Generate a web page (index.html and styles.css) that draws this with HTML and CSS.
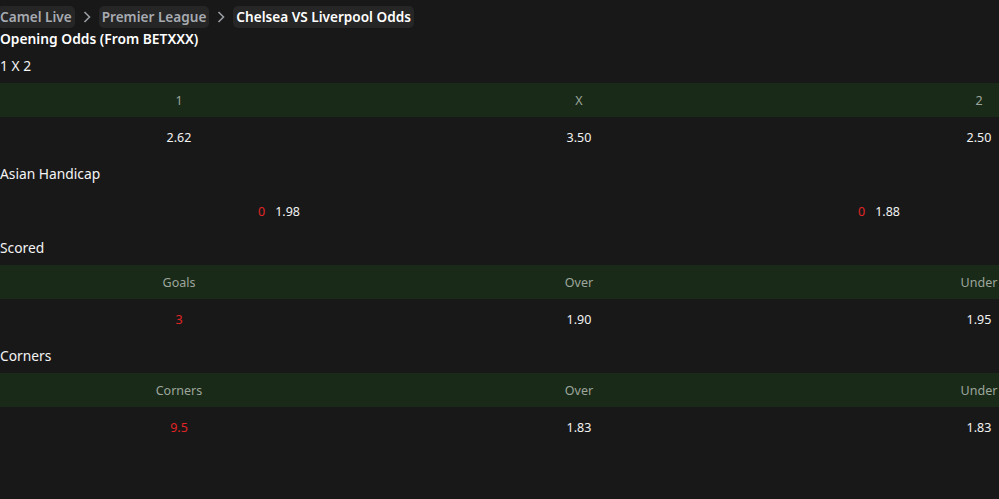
FILE: index.html
```html
<!DOCTYPE html>
<html lang="en">
<head>
<meta charset="utf-8">
<title>Chelsea VS Liverpool Odds</title>
<link rel="stylesheet" href="styles.css">
</head>
<body>
<nav class="crumbs">
  <span class="crumb">Camel Live</span>
  <svg class="chev" viewBox="0 0 8 12" width="8" height="12"><path d="M1.5 1 L6.5 6 L1.5 11" fill="none" stroke="#9a9ea4" stroke-width="1.6"/></svg>
  <span class="crumb">Premier League</span>
  <svg class="chev" viewBox="0 0 8 12" width="8" height="12"><path d="M1.5 1 L6.5 6 L1.5 11" fill="none" stroke="#9a9ea4" stroke-width="1.6"/></svg>
  <span class="crumb current">Chelsea VS Liverpool Odds</span>
</nav>
<h1 class="heading">Opening Odds (From BETXXX)</h1>

<h2 class="title">1 X 2</h2>
<table class="odds">
  <thead><tr><th>1</th><th>X</th><th>2</th></tr></thead>
  <tbody><tr><td>2.62</td><td>3.50</td><td>2.50</td></tr></tbody>
</table>

<h2 class="title">Asian Handicap</h2>
<table class="odds">
  <tbody><tr>
    <td class="half"><span class="red">0</span><span class="gap">1.98</span></td>
    <td class="half"><span class="red">0</span><span class="gap">1.88</span></td>
  </tr></tbody>
</table>

<h2 class="title">Scored</h2>
<table class="odds">
  <thead><tr><th>Goals</th><th>Over</th><th>Under</th></tr></thead>
  <tbody><tr><td class="red">3</td><td>1.90</td><td>1.95</td></tr></tbody>
</table>

<h2 class="title">Corners</h2>
<table class="odds">
  <thead><tr><th>Corners</th><th>Over</th><th>Under</th></tr></thead>
  <tbody><tr><td class="red">9.5</td><td>1.83</td><td>1.83</td></tr></tbody>
</table>
</body>
</html>
```

FILE: styles.css
```css
html, body {
  margin: 0;
  padding: 0;
  background: #181818;
  color: #f2f2f2;
  font-family: "Noto Sans", "Open Sans", sans-serif;
  overflow: hidden;
}

.crumbs {
  display: flex;
  align-items: center;
  gap: 8px;
  padding-top: 6px;
  margin-left: -3px;
  height: 22px;
}

.crumb {
  background: #262626;
  border-radius: 5px;
  padding: 0 3px;
  height: 22px;
  line-height: 22px;
  font-size: 13.6px;
  font-weight: 600;
  color: #a7abb1;
  white-space: nowrap;
}

.crumb.current {
  color: #ffffff;
}

.chev {
  display: block;
  flex: none;
}

.heading {
  margin: 0;
  font-size: 13.8px;
  font-weight: 600;
  line-height: 21px;
  color: #ffffff;
}

.title {
  margin: 0;
  font-size: 13.8px;
  font-weight: 400;
  line-height: 34px;
  height: 34px;
  color: #f4f4f4;
}

.odds {
  border-collapse: collapse;
  table-layout: fixed;
  width: 1200px;
  margin-left: -21px;
  font-size: 12.5px;
}

.odds th {
  background: #1a2a18;
  color: #9ca69c;
  font-weight: 400;
  height: 34px;
  padding: 0;
  text-align: center;
}

.odds td {
  height: 40px;
  padding: 0;
  text-align: center;
  color: #f2f2f2;
}

.odds td.red,
.red {
  color: #e22525;
}

.gap {
  margin-left: 10px;
}
```
